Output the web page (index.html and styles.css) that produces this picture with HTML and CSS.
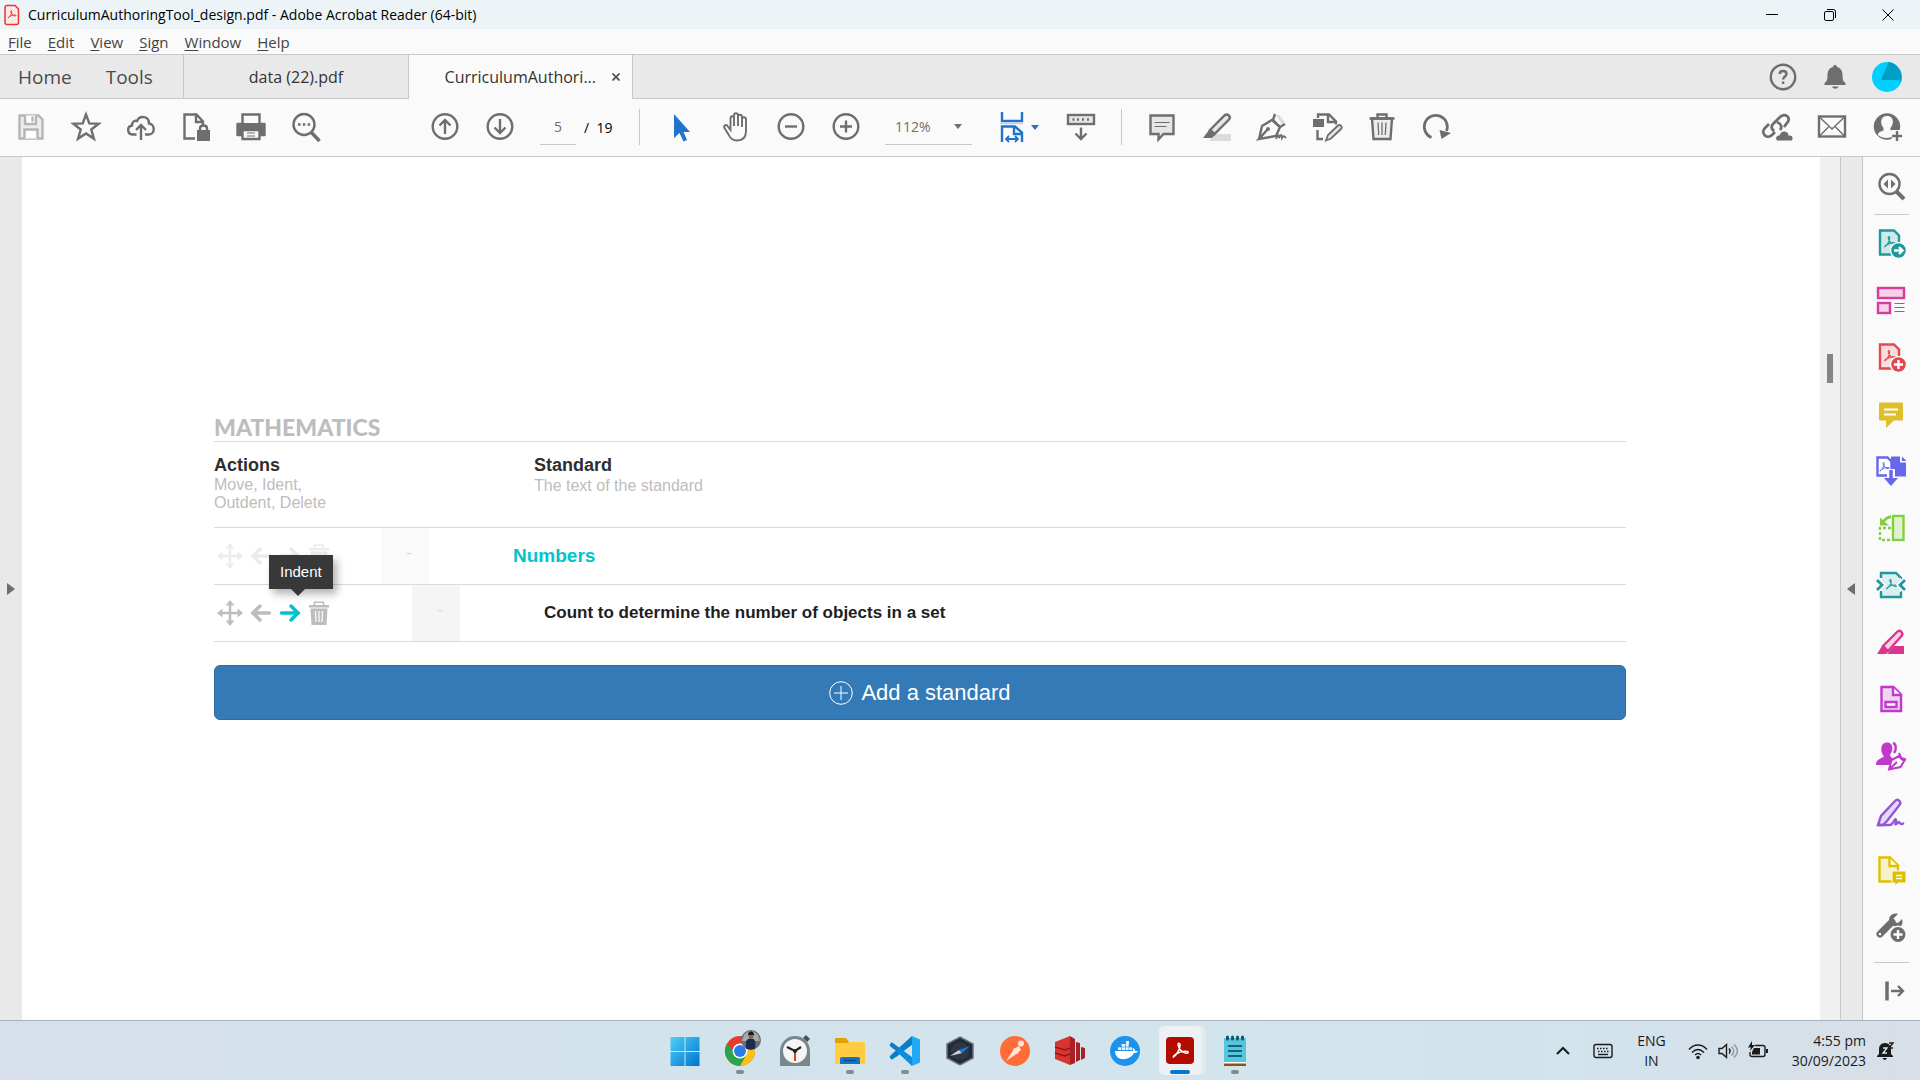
FILE: index.html
```html
<!DOCTYPE html>
<html lang="en">
  <head>
    <meta charset="UTF-8" />
    <meta name="viewport" content="width=device-width, initial-scale=1.0" />
    <title>CurriculumAuthoringTool_design.pdf - Adobe Acrobat Reader (64-bit)</title>
    <link rel="stylesheet" href="styles.css">
  </head>
  <body>
    <svg class="sprite" aria-hidden="true">
      <symbol id="trefoil" viewBox="0 0 24 24">
        <path d="M3 20c4-2 8-9 8.500-15 0-3-3-3-2.500 0 1 5 5 9.500 10 10.500 3.500.5 3.500-2.500 0-2.500-5 0-10 1.500-14 4.500-2.500 2-2 3.500-2 2.500z" fill="none" stroke="currentColor" stroke-width="2" stroke-linejoin="round"></path>
      </symbol>
      <symbol id="move" viewBox="0 0 26 26">
        <path d="M13 4v18M4 13h18" stroke="currentColor" stroke-width="2.5"></path>
        <path d="M13 0l4.500 5.500h-9zM13 26l4.500-5.500h-9zM0 13l5.500-4.500v9zM26 13l-5.500-4.500v9z" fill="currentColor"></path>
      </symbol>
      <symbol id="arrow" viewBox="0 0 22 20">
        <path d="M2.500 10h17M12 3l7 7-7 7" fill="none" stroke="currentColor" stroke-width="3.5" stroke-linecap="round" stroke-linejoin="round"></path>
      </symbol>
      <symbol id="bin" viewBox="0 0 22 24">
        <path d="M1 4h20v2.500H1zM2.500 7.500h17L18.500 24h-15z" fill="currentColor"></path>
        <path d="M6.500 4V1.200h9V4" fill="none" stroke="currentColor" stroke-width="1.5"></path>
        <path d="M7.500 10l.5 11M11 10v11M14.500 10l-.5 11" stroke="#fff" stroke-width="1.2"></path>
      </symbol>
    </svg>

    <header class="titlebar">
      <svg class="app-icon" viewBox="0 0 16 22">
        <path d="M3 1.500h8l3.500 3.500v13.500a2 2 0 0 1-2 2h-9.500a2 2 0 0 1-2-2v-15a2 2 0 0 1 2-2z" fill="#fde9e7" stroke="#e8392d" stroke-width="1.5"></path>
        <use href="#trefoil" x="3" y="5" width="10" height="11" color="#e1251b"></use>
      </svg>
      <h1>CurriculumAuthoringTool_design.pdf - Adobe Acrobat Reader (64-bit)</h1>
      <div class="window-controls">
        <button aria-label="Minimize"><svg viewBox="0 0 12 12"><path d="M0 5.500h12"></path></svg></button>
        <button aria-label="Restore"><svg viewBox="0 0 12 12"><rect x=".5" y="2.5" width="9" height="9" rx="1.5"></rect><path d="M3 .5h6.500a2 2 0 0 1 2 2v6.500"></path></svg></button>
        <button aria-label="Close"><svg viewBox="0 0 12 12"><path d="M.5 .5l11 11M11.500 .5l-11 11"></path></svg></button>
      </div>
    </header>

    <nav class="menubar">
      <a href="#"><u>F</u>ile</a>
      <a href="#"><u>E</u>dit</a>
      <a href="#"><u>V</u>iew</a>
      <a href="#"><u>S</u>ign</a>
      <a href="#"><u>W</u>indow</a>
      <a href="#"><u>H</u>elp</a>
    </nav>

    <div class="tabbar">
      <div class="home-tabs">
        <a href="#">Home</a>
        <a href="#">Tools</a>
      </div>
      <a class="tab" href="#">data (22).pdf</a>
      <div class="tab active">
        <a href="#">CurriculumAuthori...</a>
        <button aria-label="Close tab"><svg viewBox="0 0 8 8"><path d="M.5 .5l7 7M7.500 .5l-7 7" stroke="#555" stroke-width="1.8"></path></svg></button>
      </div>
      <div class="account">
        <button aria-label="Help">
          <svg class="icon" viewBox="0 0 32 32"><circle cx="16" cy="16" r="12.2"></circle><path d="M12.700 13c0-4 6.800-4 6.800 0 0 2.500-3.400 2.500-3.400 5.500M16.100 20.500v2.500"></path></svg>
        </button>
        <button aria-label="Notifications">
          <svg class="icon solid" viewBox="0 0 32 32"><path d="M16 4c1.500 0 2 1 2 2 4 1 5.500 4 5.500 8 0 5 1 7 3 8v2H5.500v-2c2-1 3-3 3-8 0-4 1.500-7 5.500-8 0-1 .5-2 2-2zM13 25.500h6.500c-1 3-5.500 3-6.500 0z"></path></svg>
        </button>
        <button aria-label="Account">
          <svg class="icon" viewBox="0 0 32 32"><circle cx="16" cy="16" r="15" fill="#00cfff" stroke="none"></circle><path d="M17.500 1a15 15 0 0 1 12 20l-1.500-2H10z" fill="#009ec4" stroke="none"></path></svg>
        </button>
      </div>
    </div>

    <div class="toolbar">
      <div class="group first">
        <button class="muted" aria-label="Save"><svg class="icon" viewBox="0 0 32 32"><path d="M4.500 4.500h19l4 4v19h-23z" fill="#ededed"></path><path d="M10 4.500v8.500h11V4.500M17.500 5.500v5M9.500 27.500v-9h13v9" fill="#fff"></path></svg></button>
        <button aria-label="Star"><svg class="icon" viewBox="0 0 32 32"><path d="M16 3.500l3.300 8.900 9.300.4-7.300 5.700 2.600 9.100-7.900-5.200-7.900 5.200 2.600-9.100-7.300-5.700 9.300-.4z"></path></svg></button>
        <button aria-label="Upload"><svg class="icon" viewBox="0 0 32 32"><path d="M11.500 23.500H8c-6 0-6.500-8-1-9 0-4 3-5.500 5-4.500 2.500-6 12-5 12 2.500 6.500.5 6 11 0 11h-4M16 29V14.500M11 19l5-5 5 5"></path></svg></button>
        <button aria-label="Protect"><svg class="icon" viewBox="0 0 32 32"><path d="M15 27.500H4.500v-24h12l6.500 7v4M16 4v7h7"></path><path d="M17 19h13v11H17z" fill="currentColor" stroke="none"></path><path d="M20 19v-1.500c0-4 7-4 7 0V19"></path></svg></button>
        <button aria-label="Print"><svg class="icon" viewBox="0 0 32 32"><path d="M2.500 13h27v11h-4v-4h-19v4h-4z" fill="currentColor" stroke-linejoin="round"></path><path d="M7.500 12V3.500h17V12M7.500 19h17v9h-17z" fill="#fafafa"></path><path d="M12 22h8M12 25h8" stroke-width="1"></path></svg></button>
        <button aria-label="Find"><svg class="icon" viewBox="0 0 32 32"><circle cx="14" cy="13.5" r="10.5"></circle><path d="M21.500 21.500L29.500 30" stroke-width="3.5"></path><path d="M8 13.500h2.500M12.800 13.500h2.500M17.600 13.500h2.500"></path></svg></button>
      </div>
      <div class="group paging">
        <button aria-label="Previous page"><svg class="icon" viewBox="0 0 32 32"><circle cx="16" cy="15.5" r="12.3"></circle><path d="M16 23V9M10.500 14.500L16 9l5.500 5.500"></path></svg></button>
        <button aria-label="Next page"><svg class="icon" viewBox="0 0 32 32"><circle cx="16" cy="15.5" r="12.3"></circle><path d="M16 8v14M10.500 16.500L16 22l5.500-5.500"></path></svg></button>
        <input type="text" value="5" aria-label="Page number">
        <span class="total">/&nbsp; 19</span>
      </div>
      <div class="group view">
        <button class="blue" aria-label="Select"><svg class="icon solid" viewBox="0 0 32 32"><path d="M9 3v24l5.500-5 4 8.500 3.500-1.500-3.500-8H25z"></path></svg></button>
        <button aria-label="Hand"><svg class="icon" viewBox="0 0 32 32"><path d="M10.500 19V7.500c0-3 3.500-3 3.500 0V15 4.500c0-3 4-3 4 0V15 6c0-3 4-3 4 0v10-7.500c0-3 4-3 4 0V20c0 6-3 9.500-9 9.500-5 0-7-2.500-8.500-6l-4-6.500c-1.500-2.500 1.500-4 3-2z" stroke-width="1.9"></path></svg></button>
        <button aria-label="Zoom out"><svg class="icon" viewBox="0 0 32 32"><circle cx="16" cy="15.5" r="12.3"></circle><path d="M10 15.500h12"></path></svg></button>
        <button aria-label="Zoom in"><svg class="icon" viewBox="0 0 32 32"><circle cx="16" cy="15.5" r="12.3"></circle><path d="M10 15.500h12M16 9.500v12"></path></svg></button>
        <div class="zoom">
          <select aria-label="Zoom level"><option>112%</option></select>
          <svg viewBox="0 0 8 5"><path d="M0 0h8l-4 5z"></path></svg>
        </div>
        <button class="fit blue" aria-label="Fit width">
          <svg class="icon" viewBox="0 0 32 32"><path d="M6 1v9h20V1M6 31V15.500h13l7 6V31M18 16v7h8"></path><path d="M4 12.500h23" stroke="#bcd5ef" stroke-width="1.5"></path><path d="M10 28h12M13 25l-3 3 3 3M19 25l3 3-3 3" stroke-width="1.8"></path></svg>
          <svg class="caret" viewBox="0 0 8 5"><path d="M0 0h8l-4 5z"></path></svg>
        </button>
        <button aria-label="Page display"><svg class="icon" viewBox="0 0 32 32"><rect x="3" y="4" width="26" height="9" fill="#e6e6e6"></rect><path d="M7.500 8.500h2M12 8.500h2M17 8.500h2M22 8.500h2M16 16.500V28M10.500 22.500L16 28l5.500-5.500"></path></svg></button>
      </div>
      <div class="group markup">
        <button aria-label="Comment"><svg class="icon" viewBox="0 0 32 32"><path d="M4.500 4.500h23v18.500h-10l-5 5.500V23h-8z" fill="#e6e6e6"></path><path d="M8.500 11.500h15M8.500 15.500h12" stroke-width="1.2"></path></svg></button>
        <button aria-label="Highlight"><svg class="icon" viewBox="0 0 32 32"><path d="M15 23h15v7H8z" fill="#dcdcdc" stroke="none"></path><path d="M9 19L23.500 4.500c3-2.500 7 1 4.500 4L13.500 23z" fill="#e6e6e6"></path><path d="M8 19l6 5-3 3H2z" fill="currentColor" stroke="none"></path></svg></button>
        <button aria-label="Sign"><svg class="icon" viewBox="0 0 32 32"><path d="M20 4l6 10 3-3-6-7z" fill="#ddd" stroke="none"></path><path d="M19 3l-2 6 7 7 5-3"></path><path d="M3 28l3-13 10-6 8 7-4 9-17 3 8.500-9.500"></path><circle cx="12" cy="18" r="2" fill="currentColor" stroke="none"></circle><path d="M20 28c2-5 3-5 3-1 2-4 3-4 3 0 2-3 2-2 4 0" stroke-width="1.8"></path></svg></button>
        <button aria-label="Edit"><svg class="icon" viewBox="0 0 32 32"><path d="M2 8h11v8H2z" fill="currentColor" stroke="none"></path><path d="M7 7V3.500h11l7 7v3M17 4v7h7M6.500 19v9H12"></path><path d="M15 29.500l2-5.500 10-9.500c2-1.500 5 1.500 3 3.500L20 27.500z" fill="#e6e6e6" stroke-width="1.8"></path></svg></button>
        <button aria-label="Delete"><svg class="icon" viewBox="0 0 32 32"><path d="M6 7.500h20L24.500 28h-17z" fill="#ededed"></path><path d="M3.500 7.500h25M11.500 7V3.500h9V7"></path><path d="M12 11.500l.7 12.500M16 11.500V24M20 11.500L19.300 24" stroke-width="1.3"></path></svg></button>
        <button aria-label="Rotate"><svg class="icon" viewBox="0 0 32 32"><path d="M10.500 26.500A11.500 11.500 0 1 1 25.500 20" stroke-width="2.8"></path><path d="M18.500 19l11.500 3-9.500 6z" fill="currentColor" stroke="none"></path></svg></button>
      </div>
      <div class="group share">
        <button aria-label="Share link"><svg class="icon" viewBox="0 0 32 32"><path d="M13 20c-3-2-3-5-1-7l7-7c5-5 12 1 7 6l-3 4M16 11c5 2 5 6 3 8M8 13l-4 4c-5 5 2 12 7 7l3-3" stroke-width="2.8"></path><path d="M16 29.500c-2-2-.5-5.500 2.500-5 1.500-6 9-4.500 9 0 4.500-.5 4.500 3 3.500 5z" fill="currentColor" stroke="none"></path></svg></button>
        <button aria-label="Email"><svg class="icon" viewBox="0 0 32 32"><rect x="3" y="5.5" width="26" height="20"></rect><path d="M3.500 6L16 18 28.500 6M3.500 25l9-9M28.500 25l-9-9" stroke-width="1.5"></path></svg></button>
        <button aria-label="Add people"><svg class="icon" viewBox="0 0 32 32"><circle cx="16" cy="15.5" r="13.2" fill="currentColor" stroke="none"></circle><path d="M16 5c8 0 6.500 9 3.500 12v2.500c3 1 5 1 5 3.500C20 28 12 28 7 24c0-3 3-3.500 5.500-4.500V17C9 13 9 5 16 5z" fill="#fafafa" stroke="none"></path><path d="M20 19h12v13H21z" fill="#fafafa" stroke="none"></path><path d="M26 20v10M21 25h10"></path></svg></button>
      </div>
    </div>

    <div class="workspace">
      <button class="expander" aria-label="Open navigation pane"><svg viewBox="0 0 8 12"><path d="M0 0l8 6-8 6z"></path></svg></button>

      <main class="page">
        <h2>MATHEMATICS</h2>
        <table class="standards">
          <thead>
            <tr>
              <th class="actions">Actions<small>Move, Ident,<br>Outdent, Delete</small></th>
              <th class="standard">Standard<small>The text of the standard</small></th>
            </tr>
          </thead>
          <tbody>
            <tr>
              <td>
                <div class="row-actions faded">
                  <button aria-label="Move"><svg class="move"><use href="#move"></use></svg></button>
                  <button aria-label="Outdent"><svg class="arrow back"><use href="#arrow"></use></svg></button>
                  <button aria-label="Indent"><svg class="arrow"><use href="#arrow"></use></svg></button>
                  <button aria-label="Delete"><svg class="bin"><use href="#bin"></use></svg></button>
                </div>
              </td>
              <td>
                <div class="entry top">
                  <span class="code">-</span>
                  <span class="text">Numbers</span>
                </div>
              </td>
            </tr>
            <tr>
              <td>
                <div class="row-actions">
                  <button aria-label="Move"><svg class="move"><use href="#move"></use></svg></button>
                  <button aria-label="Outdent"><svg class="arrow back"><use href="#arrow"></use></svg></button>
                  <button class="on" aria-label="Indent"><svg class="arrow"><use href="#arrow"></use></svg><span class="tooltip">Indent</span></button>
                  <button aria-label="Delete"><svg class="bin"><use href="#bin"></use></svg></button>
                </div>
              </td>
              <td>
                <div class="entry child">
                  <span class="code">-</span>
                  <span class="text">Count to determine the number of objects in a set</span>
                </div>
              </td>
            </tr>
          </tbody>
        </table>
        <button class="add">
          <svg viewBox="0 0 24 24"><circle cx="12" cy="12" r="11.3"></circle><path d="M12 5v14M5 12h14"></path></svg>
          Add a standard
        </button>
      </main>

      <div class="scrollbar"><div class="thumb"></div></div>
      <button class="expander right" aria-label="Collapse tools pane"><svg viewBox="0 0 8 12"><path d="M8 0L0 6l8 6z"></path></svg></button>

      <aside class="tools">
        <button aria-label="Search tools"><svg class="icon" viewBox="0 0 32 32"><circle cx="14.5" cy="14" r="10"></circle><path d="M21.500 21.500L29 29" stroke-width="4"></path><path d="M13 9.500v9L8.500 14zM16 9.500v9l4.500-4.500z" fill="currentColor" stroke="none"></path></svg></button>
        <hr>
        <button class="teal" aria-label="Export PDF"><svg class="icon" viewBox="0 0 32 32"><path d="M5 3.500h14l5 5v19H5z" fill="#cfe8e8"></path><use href="#trefoil" x="8" y="8" width="14" height="14"></use><circle cx="23.5" cy="23.5" r="8" fill="currentColor" stroke="#fafafa" stroke-width="1.5"></circle><path d="M19 23.500h8M24 20l3.500 3.500L24 27" stroke="#fff"></path></svg></button>
        <button class="pink" aria-label="Organize pages"><svg class="icon" viewBox="0 0 32 32"><rect x="3" y="4" width="26" height="10" fill="#f5d0e6"></rect><rect x="3" y="19" width="12" height="10" fill="#f5d0e6"></rect><path d="M19.500 19.500h10M19.500 23.500h10M19.500 27.500h10" stroke-width="1.2"></path></svg></button>
        <button class="red" aria-label="Create PDF"><svg class="icon" viewBox="0 0 32 32"><path d="M5 3.500h14l5 5v19H5z" fill="#f9dedf"></path><use href="#trefoil" x="8" y="8" width="14" height="14"></use><circle cx="23.5" cy="23.5" r="8" fill="currentColor" stroke="#fafafa" stroke-width="1.5"></circle><path d="M19 23.500h9M23.500 19v9" stroke="#fff"></path></svg></button>
        <button class="mustard" aria-label="Comment"><svg class="icon" viewBox="0 0 32 32"><path d="M5 4.500h22a1 1 0 0 1 1 1v16a1 1 0 0 1-1 1h-8L11 30v-7.500H5a1 1 0 0 1-1-1v-16a1 1 0 0 1 1-1z" fill="currentColor" stroke="none"></path><path d="M9 11.500h14M9 16.500h12" stroke="#fff" stroke-width="2"></path></svg></button>
        <button class="indigo" aria-label="Combine files"><svg class="icon" viewBox="0 0 32 32"><path d="M16 1.500h9v6h6v14H16z" fill="currentColor" stroke="none"></path><path d="M27 1.500l4.500 4.500H27z" fill="currentColor" stroke="none"></path><path d="M2.500 2.500h10l4 4v14h-14z" fill="#fff"></path><use href="#trefoil" x="3.500" y="6" width="12" height="12"></use><path d="M16 14v12" stroke="#fafafa" stroke-width="8"></path><path d="M16 15v10" stroke-width="3.5"></path><path d="M9 23h14l-7 8z" fill="currentColor" stroke="none"></path></svg></button>
        <button class="green" aria-label="Crop pages"><svg class="icon" viewBox="0 0 32 32"><rect x="18" y="4" width="10.5" height="24" fill="#e0f2cf"></rect><path d="M16 16H5v12h11" stroke-dasharray="3 2"></path><path d="M16 5c-4 0-6 2-8 5" stroke-width="2.8"></path><path d="M5 5.500v8h9z" fill="currentColor" stroke="none"></path></svg></button>
        <button class="teal" aria-label="Compress PDF"><svg class="icon" viewBox="0 0 32 32"><path d="M6 9V4h15l5 5v2M6 22v6h20v-6" fill="#dceeee"></path><path d="M7 9h19v14H7z" fill="#dceeee" stroke="none"></path><use href="#trefoil" x="10" y="9" width="13" height="13"></use><path d="M2 11l5 5-5 5M30 11l-5 5 5 5" stroke="#fafafa" stroke-width="6"></path><path d="M2 11l5 5-5 5M30 11l-5 5 5 5" stroke-width="2.8"></path></svg></button>
        <button class="magenta" aria-label="Redact"><svg class="icon" viewBox="0 0 32 32"><path d="M19 20h10v8H12z" fill="currentColor" stroke="none"></path><path d="M8 20L22 6c3-3 7 1 4.500 4L13 25z" fill="#f8d3e4"></path><path d="M7 20l6 6-2 2H2z" fill="currentColor" stroke="none"></path></svg></button>
        <button class="violet" aria-label="Prepare form"><svg class="icon" viewBox="0 0 32 32"><path d="M6.500 4h12l7.500 7.500V28H6.500z" fill="#efd5f2"></path><path d="M18 4.500V12h8M10.500 19h11v5h-11z" fill="#fff"></path></svg></button>
        <button class="violet" aria-label="Request signatures"><svg class="icon" viewBox="0 0 32 32"><path d="M12 2.500c7 0 6 9 3 12 0 3 3 3.500 3.500 4.500L14 25H1c0-5 3-5.500 8-8.500-4-4-4-14 3-14z" fill="currentColor" stroke="none"></path><path d="M18 3c3.500 1 3.500 7 1 10"></path><path d="M14 29.500l2.500-9.500 8.500-4.500c.5 3 2 4.500 4.500 5L25.500 27zl8-7.500" fill="#fafafa" stroke-width="2"></path><path d="M24 13l2 5 5 1.500" stroke-width="2"></path></svg></button>
        <button class="purple" aria-label="Fill and sign"><svg class="icon" viewBox="0 0 32 32"><path d="M3 28l3-9L20 4c3-3 7 1 4.500 4L12 24l-4 4z" fill="#e5daf5"></path><path d="M3 28h12c3 0 5-8 6-5s-2 5 0 4 3-3 4-1 2 1 4 0"></path></svg></button>
        <button class="gold" aria-label="Send for comments"><svg class="icon" viewBox="0 0 32 32"><path d="M4.500 3.500H15l8 8v16H4.500z" fill="#f7f0cd"></path><path d="M14.500 4v8H23" fill="#fff"></path><path d="M17 17h14v12h-8l-3 3v-3h-3z" fill="currentColor" stroke="#fafafa" stroke-width="1"></path><path d="M21 21.500h6M21 24.500h6" stroke="#fff" stroke-width="1.5"></path></svg></button>
        <button aria-label="More tools"><svg class="icon" viewBox="0 0 32 32"><path d="M5 23L17 11" stroke-width="7" stroke-linecap="round"></path><path d="M23 3c-6-2-11 4-8 9l5 4c5 2 9-2 7-8l-4 4-4-1-1-3z" fill="currentColor" stroke="none"></path><circle cx="5" cy="23" r="1.2" fill="#fff" stroke="none"></circle><circle cx="23" cy="23.5" r="8.2" fill="currentColor" stroke="#fafafa" stroke-width="1.5"></circle><path d="M18.500 23.500h9M23 19v9" stroke="#fff"></path></svg></button>
        <hr class="last">
        <button aria-label="Hide pane"><svg class="icon" viewBox="0 0 32 32"><path d="M12 6.500v19" stroke-width="3.5"></path><path d="M16 16h12M23 11l5 5-5 5"></path></svg></button>
      </aside>
    </div>

    <footer class="taskbar">
      <div class="apps">
        <button aria-label="Start"><svg viewBox="0 0 32 32">
          <defs><linearGradient id="win" x1="0" y1="0" x2="1" y2="1"><stop offset="0" stop-color="#4fd0fb"></stop><stop offset="1" stop-color="#0073cf"></stop></linearGradient></defs>
          <path d="M1.500 2h14v14h-14zM16.500 2h14v14h-14zM1.500 17h14v14h-14zM16.500 17h14v14h-14z" fill="url(#win)"></path></svg></button>
        <button class="open" aria-label="Chrome"><svg viewBox="0 0 32 32">
          <circle cx="16" cy="16" r="15" fill="#e33b2e"></circle><path d="M16 23.500L3 8.500A15 15 0 0 0 16 31l7-12z" fill="#2da24c"></path><path d="M16 8.500h13a15 15 0 0 1-13 22.500l6.500-11.500z" fill="#fbc116"></path>
          <circle cx="16" cy="16" r="7.5" fill="#fff"></circle><circle cx="16" cy="16" r="6" fill="#2f7be8"></circle>
          <circle cx="27" cy="5" r="10" fill="#6a7275"></circle><path d="M20 0q7-8 14 0l2 6H18z" fill="#a6aba8"></path><path d="M22 13.500c-1-8 1-10 5-10s5 3 4 10a10 10 0 0 1-9 0z" fill="#1e2b52"></path><circle cx="27" cy="1" r="2.5" fill="#8c5f52"></circle><path d="M24 0c0-5 6-5 6 0z" fill="#1b1a1c"></path></svg></button>
        <button aria-label="Clock"><svg viewBox="0 0 32 32">
          <path d="M24 3l3-3 4 4-3 3z" fill="#4b5156"></path><path d="M1 31V16a15 15 0 0 1 30 0v15z" fill="#7b858c"></path><circle cx="16" cy="16" r="12" fill="#f5f5f5"></circle>
          <path d="M8 12l8 4 6-4" fill="none" stroke="#222" stroke-width="2.2"></path><path d="M16 17v9" stroke="#d8441d" stroke-width="2"></path><circle cx="16" cy="16" r="2" fill="#222"></circle></svg></button>
        <button class="open" aria-label="File Explorer"><svg viewBox="0 0 32 32">
          <path d="M1 4q0-1 1-1h10l3 4v6H1z" fill="#e2a100"></path><path d="M1 8h12l3-1h14q1 0 1 1v20q0 1-1 1H2q-1 0-1-1z" fill="#ffcd3f"></path><path d="M6 29v-5q0-2 2-2h16q2 0 2 2v5z" fill="#1373c8"></path><path d="M10 25.500h12" stroke="#0b4b8c" stroke-width="1.5"></path></svg></button>
        <button class="open" aria-label="VS Code"><svg viewBox="0 0 32 32">
          <path d="M3 10l20 15M3 22L23 7" stroke="#0a7fc9" stroke-width="4.5" stroke-linecap="round"></path><path d="M23 1l8 3.500v23L23 31z" fill="#23a9f2"></path><path d="M23 1v9L7 22l-4-3z" fill="#0a7fc9"></path><path d="M23 31v-9L11 13l-3 4z" fill="#0d8ddb"></path><path d="M23 10v12l-8-6z" fill="#d3e3eb"></path></svg></button>
        <button aria-label="Compass"><svg viewBox="0 0 32 32">
          <path d="M16 2l13 7v14l-13 7-13-7V9z" fill="#232936" stroke="#687280" stroke-width="1.5"></path><circle cx="16" cy="16" r="9" fill="#303744"></circle><path d="M6 21l9-6 3 3z" fill="#d0d5d8"></path><path d="M26 11l-11 4 3 3z" fill="#187be0"></path></svg></button>
        <button aria-label="Postman"><svg viewBox="0 0 32 32">
          <circle cx="16" cy="16" r="15" fill="#ff6c37"></circle><path d="M7 26l8-12 5-3 2 4-6 5z" fill="#fbe5db"></path><circle cx="22" cy="8.5" r="3" fill="#fbe5db"></circle><path d="M16 13l-2 5M19 14l-1 5" fill="none" stroke="#fbe5db" stroke-width="1.5"></path></svg></button>
        <button aria-label="Redshift"><svg viewBox="0 0 32 32">
          <path d="M1 7l15-6v29L1 24z" fill="#d8352e"></path><path d="M16 1l5 3v24l-5 2zM22 7l4 1v17l-4 2zM27 12l4 1v10l-4 2z" fill="#a82224"></path><path d="M1 12l10 3 5-2M1 18l10 3 5-2" fill="none" stroke="#8d1a1c" stroke-width="1.5"></path></svg></button>
        <button aria-label="Docker"><svg viewBox="0 0 32 32">
          <circle cx="16" cy="16" r="15" fill="#1d91ec"></circle><path d="M6 16h18c0-2-1-2 0-3 2 1 2 2 2 3h3c-1 2-3 2-4 2-4 8-19 9-19-2z" fill="#fff"></path><path d="M9 12h14v3H9zM12 9h8v3h-8zM17 6h3v3h-3z" fill="#e3f2fd"></path><path d="M12.500 9v6M16.500 6v9M20 9v6M9 12h14" stroke="#1d91ec" stroke-width=".6"></path></svg></button>
        <button class="open current" aria-label="Acrobat Reader"><svg viewBox="0 0 32 32">
          <rect x="2" y="2" width="28" height="27" rx="4" fill="#b30b00"></rect><use href="#trefoil" x="7" y="6" width="19" height="19" color="#fff"></use></svg></button>
        <button class="open" aria-label="Notepad"><svg viewBox="0 0 32 32">
          <path d="M5 3h22v24H5z" fill="#56c5de"></path><path d="M5 28h22v3H5z" fill="#914f14"></path><path d="M5 27h22v1.500H5z" fill="#fff"></path><path d="M9 11h14M9 16h14M9 21h14" stroke="#12647c" stroke-width="1.8"></path><path d="M8.500 2v2M13.500 2v2M18.500 2v2M23.500 2v2" stroke="#12566c" stroke-width="3" stroke-linecap="round"></path></svg></button>
      </div>
      <div class="tray">
        <button aria-label="Hidden icons"><svg viewBox="0 0 20 20"><path d="M4 13l6-6 6 6" stroke-width="2"></path></svg></button>
        <button class="keyboard" aria-label="Touch keyboard"><svg viewBox="0 0 20 20"><rect x="1" y="3.5" width="18" height="13" rx="2"></rect><path d="M4 7.500h12M5 10.500h11" stroke-dasharray="1.5 1.5"></path><path d="M5 13.500h10"></path></svg></button>
        <button class="lang">ENG<br>IN</button>
        <button class="status" aria-label="Network, sound, battery">
          <svg viewBox="0 0 20 20"><path d="M1 8.500c5-6 13-6 18 0M4 11.500c4-4 8-4 12 0M7 14c2-2 4-2 6 0"></path><circle cx="10" cy="16.5" r="1.8" fill="currentColor" stroke="none"></circle></svg>
          <svg viewBox="0 0 20 20"><path d="M1 7.500h3l4.500-4v13l-4.500-4H1zM11 7.500c1.500 2 1.500 3.500 0 5"></path><path d="M13.500 5.500c3 3 3 6 0 9M16 3.500c4.500 4 4.500 9 0 13" stroke="#8e999e"></path></svg>
          <svg viewBox="0 0 20 20"><path d="M7 4.500h8a2 2 0 0 1 2 2v7a2 2 0 0 1-2 2H4a2 2 0 0 1-2-2V11"></path><path d="M6 7h6v6.500H4V11zM18 8h2v4h-2zM4 0L0 6.500h3L2 10l5-6H4z" fill="currentColor" stroke="none"></path></svg>
        </button>
        <button class="clock">4:55 pm<br>30/09/2023</button>
        <button class="bell" aria-label="Do not disturb"><svg viewBox="0 0 20 20"><path d="M9 2c5 0 6 4 6 7v4l2 2v1H1v-1l2-2V8c0-3 2-6 6-6zM6.500 17h4.500c-1 2.500-3.500 2.500-4.500 0z" fill="currentColor" stroke="none"></path><path d="M7 7h4l-4 5h4" stroke="#dce3ea"></path><path d="M13 2h4l-4 5h4"></path></svg></button>
      </div>
    </footer>
  </body>
</html>
```

FILE: styles.css
```css
:root {
  --ink: #6e6e6e;
  --panel: #fafafa;
  --strip: #e9e9e9;
  --line: #c8c8c8;
  --row-line: #dadada;
  --blue: #2273cc;
  --accent: #00c4cb;
}

* {
  box-sizing: border-box;
}

body {
  display: flex;
  flex-direction: column;
  min-height: 100vh;
  margin: 0;
  color: #1b1b1b;
  background: #fff;
  font-family: "Open Sans", "Segoe UI", sans-serif;
  font-size: 14px;
}

button, input, select {
  margin: 0;
  padding: 0;
  border: 0;
  border-radius: 0;
  color: inherit;
  background: none;
  font: inherit;
}

button {
  display: flex;
  align-items: center;
  justify-content: center;
  cursor: pointer;
}

a {
  color: inherit;
  text-decoration: none;
}

.sprite {
  position: absolute;
  width: 0;
  height: 0;
}

.icon {
  flex: none;
  width: 32px;
  height: 32px;
  fill: none;
  stroke: currentColor;
  stroke-width: 2.4;
}

.icon.solid {
  fill: currentColor;
  stroke: none;
}

/* title bar and menu */
.titlebar {
  display: flex;
  align-items: center;
  height: 29px;
  padding-left: 4px;
  background: #ecf4f8;
}

.app-icon {
  width: 16px;
  height: 22px;
}

.titlebar h1 {
  flex: 1;
  margin: 0 0 0 8px;
  color: #000;
  font-size: 14px;
  font-weight: 400;
}

.window-controls {
  display: flex;
  padding-right: 3px;
}

.window-controls button {
  width: 58px;
  height: 29px;
}

.window-controls svg {
  width: 12px;
  height: 12px;
  fill: none;
  stroke: #000;
}

.menubar {
  display: flex;
  align-items: center;
  gap: 16px;
  height: 25px;
  padding-left: 8px;
  color: #444;
  background: var(--panel);
  font-size: 15px;
}

.menubar u {
  text-underline-offset: 2px;
}

/* tabs */
.tabbar {
  display: flex;
  height: 45px;
  border-top: 1px solid var(--line);
  color: #4b4b4b;
  background: var(--strip);
  box-shadow: inset 0 -1px var(--line);
}

.home-tabs {
  display: flex;
  align-items: center;
  gap: 34px;
  width: 183px;
  padding-left: 18px;
  font-size: 19px;
}

.tab {
  display: flex;
  align-items: center;
  justify-content: center;
  width: 225px;
  border-left: 1px solid var(--line);
  color: #333;
  font-size: 16px;
}

.tab.active {
  justify-content: flex-end;
  gap: 16px;
  padding-right: 12px;
  border-right: 1px solid var(--line);
  background: var(--panel);
}

.tab svg {
  width: 8px;
  height: 8px;
}

.account {
  display: flex;
  margin-left: auto;
  padding-right: 7px;
  color: var(--ink);
}

.account button {
  width: 52px;
}

/* toolbar */
.toolbar {
  display: flex;
  align-items: center;
  height: 58px;
  padding-bottom: 1px;
  border-bottom: 1px solid var(--line);
  color: var(--ink);
  background: var(--panel);
}

.group {
  display: flex;
  align-items: center;
}

.group button {
  width: 55px;
  height: 56px;
}

.group.first {
  padding: 0 84px 0 3px;
}

.group .muted {
  color: #b5b5b5;
}

.group .blue {
  color: var(--blue);
}

.paging input {
  width: 36px;
  height: 36px;
  margin-left: 13px;
  border-bottom: 1px solid var(--line);
  text-align: center;
}

.total {
  width: 63px;
  padding-left: 8px;
  color: #000;
}

.view, .markup {
  height: 36px;
  padding: 0 13px;
  border-left: 1px solid var(--line);
}

.markup {
  padding-left: 12px;
}

.zoom {
  display: grid;
  align-items: center;
  width: 87px;
  height: 36px;
  margin: 0 28px 0 12px;
  border-bottom: 1px solid var(--line);
}

.zoom select {
  grid-area: 1 / 1;
  height: 35px;
  padding-left: 10px;
  appearance: none;
}

.zoom svg {
  grid-area: 1 / 1;
  justify-self: end;
  width: 8px;
  height: 5px;
  margin-right: 10px;
  fill: currentColor;
  pointer-events: none;
}

.group .fit {
  gap: 3px;
  width: 44px;
  margin-right: 14px;
  margin-left: -5px;
}

.caret {
  flex: none;
  width: 8px;
  height: 5px;
  fill: currentColor;
}

.share {
  margin-left: auto;
  padding-right: 6px;
}

/* document area */
.workspace {
  display: flex;
  flex: 1;
}

.expander {
  width: 22px;
  color: var(--ink);
  background: var(--strip);
}

.expander svg {
  width: 8px;
  height: 12px;
  fill: currentColor;
}

.expander.right {
  width: 23px;
  padding-right: 2px;
  border: solid var(--line);
  border-width: 0 1px;
}

.page {
  flex: 1;
  padding: 258px 194px 0 192px;
  font-family: "Liberation Sans", Arial, sans-serif;
}

.page h2 {
  margin: 0;
  padding-bottom: 2px;
  color: #bdbdbd;
  font-family: Lato, sans-serif;
  font-size: 23px;
  font-weight: 900;
  line-height: 24px;
}

.standards {
  width: 100%;
  border-top: 1px solid var(--row-line);
  border-collapse: collapse;
  table-layout: fixed;
}

.standards tr {
  border-bottom: 1px solid var(--row-line);
}

.standards th {
  height: 86px;
  padding: 12px 0 0;
  color: #2e2e2e;
  font-size: 18px;
  line-height: 22px;
  text-align: left;
  vertical-align: top;
}

.standards .actions {
  width: 167px;
}

.standards .standard {
  padding-left: 153px;
}

.standards small {
  display: block;
  color: #bdbdbd;
  font-size: 16px;
  font-weight: 400;
  line-height: 18px;
}

.standards .standard small {
  line-height: 20px;
}

.standards td {
  padding: 0;
}

.row-actions {
  display: flex;
  align-items: center;
  gap: 7px;
  padding-left: 3px;
  color: #bdbdbd;
}

.row-actions.faded {
  color: #ebebeb;
}

.row-actions button {
  position: relative;
}

.row-actions .on {
  color: var(--accent);
}

.move {
  width: 26px;
  height: 26px;
}

.arrow {
  width: 22px;
  height: 20px;
}

.arrow.back {
  transform: scaleX(-1);
}

.bin {
  width: 22px;
  height: 24px;
}

.tooltip {
  position: absolute;
  bottom: 34px;
  left: -10px;
  padding: 0 11px;
  color: #fff;
  background: #383838;
  box-shadow: 4px 5px 8px rgba(0, 0, 0, .3);
  font-size: 15px;
  line-height: 34px;
}

.tooltip::after {
  content: '';
  position: absolute;
  top: 100%;
  left: 22px;
  border: solid transparent;
  border-width: 7px 7px 0;
  border-top-color: #383838;
}

.entry {
  display: flex;
  align-items: center;
  gap: 84px;
  height: 56px;
  color: #1e1e1e;
  font-size: 17px;
  font-weight: 700;
}

.entry.child {
  padding-left: 31px;
}

.entry.top .text {
  color: var(--accent);
  font-size: 19px;
}

.code {
  width: 48px;
  height: 56px;
  padding-left: 8px;
  color: #dcdcdc;
  background: #f5f5f5;
  font-weight: 400;
  line-height: 50px;
  text-align: center;
}

.top .code {
  background: #fafafa;
}

.add {
  gap: 8px;
  width: 100%;
  height: 55px;
  margin-top: 23px;
  border: 1px solid #2e6da4;
  border-radius: 6px;
  color: #fff;
  background: #337ab7;
  font-size: 22px;
}

.add svg {
  width: 24px;
  height: 24px;
  fill: none;
  stroke: currentColor;
}

.scrollbar {
  width: 20px;
  padding: 197px 7px 0;
  background: #f0f0f0;
}

.thumb {
  width: 6px;
  height: 29px;
  background: #858585;
}

.tools {
  width: 57px;
  color: var(--ink);
  background: var(--panel);
}

.tools button {
  width: 56px;
  height: 57px;
}

.tools hr {
  width: 35px;
  height: 1px;
  margin: 0 auto -1px;
  border: 0;
  background: var(--line);
}

.tools .last {
  margin-top: 7px;
}

.tools .teal { color: #20979b; }
.tools .pink { color: #d83b9b; }
.tools .red { color: #e34850; }
.tools .mustard { color: #dfbf2b; }
.tools .indigo { color: #6767ec; }
.tools .green { color: #84cf40; }
.tools .magenta { color: #db3590; }
.tools .violet { color: #c038cc; }
.tools .purple { color: #9256d9; }
.tools .gold { color: #dfc000; }

/* taskbar */
.taskbar {
  display: grid;
  grid-template-columns: 1fr auto 1fr;
  height: 60px;
  border-top: 1px solid #a9b4bc;
  color: #1b1b1b;
  background: linear-gradient(90deg, #d6dfea, #d3e3eb 30%, #d1e4ec 80%, #d9dee7);
}

.apps {
  display: flex;
  grid-column: 2;
}

.apps button {
  position: relative;
  width: 55px;
}

.apps svg {
  width: 32px;
  height: 32px;
  overflow: visible;
}

.apps .open::after {
  content: '';
  position: absolute;
  bottom: 6px;
  width: 8px;
  height: 4px;
  border-radius: 2px;
  background: #858a8d;
}

.apps .current::before {
  content: '';
  position: absolute;
  inset: 5px 6px 5px 6px;
  border-radius: 5px;
  background: #ebf1f4;
  box-shadow: 4px 0 #dfe9ee;
}

.apps .current svg {
  position: relative;
}

.apps .current::after {
  width: 20px;
  background: #0078d4;
}

.tray {
  display: flex;
  justify-content: flex-end;
  padding-right: 24px;
  line-height: 20px;
}

.tray svg {
  width: 20px;
  height: 20px;
  fill: none;
  stroke: currentColor;
  stroke-width: 1.4;
}

.keyboard {
  margin-left: 20px;
}

.lang {
  margin: 0 22px 0 24px;
}

.status {
  gap: 10px;
}

.clock {
  margin: 0 10px 0 24px;
  text-align: right;
}
```
